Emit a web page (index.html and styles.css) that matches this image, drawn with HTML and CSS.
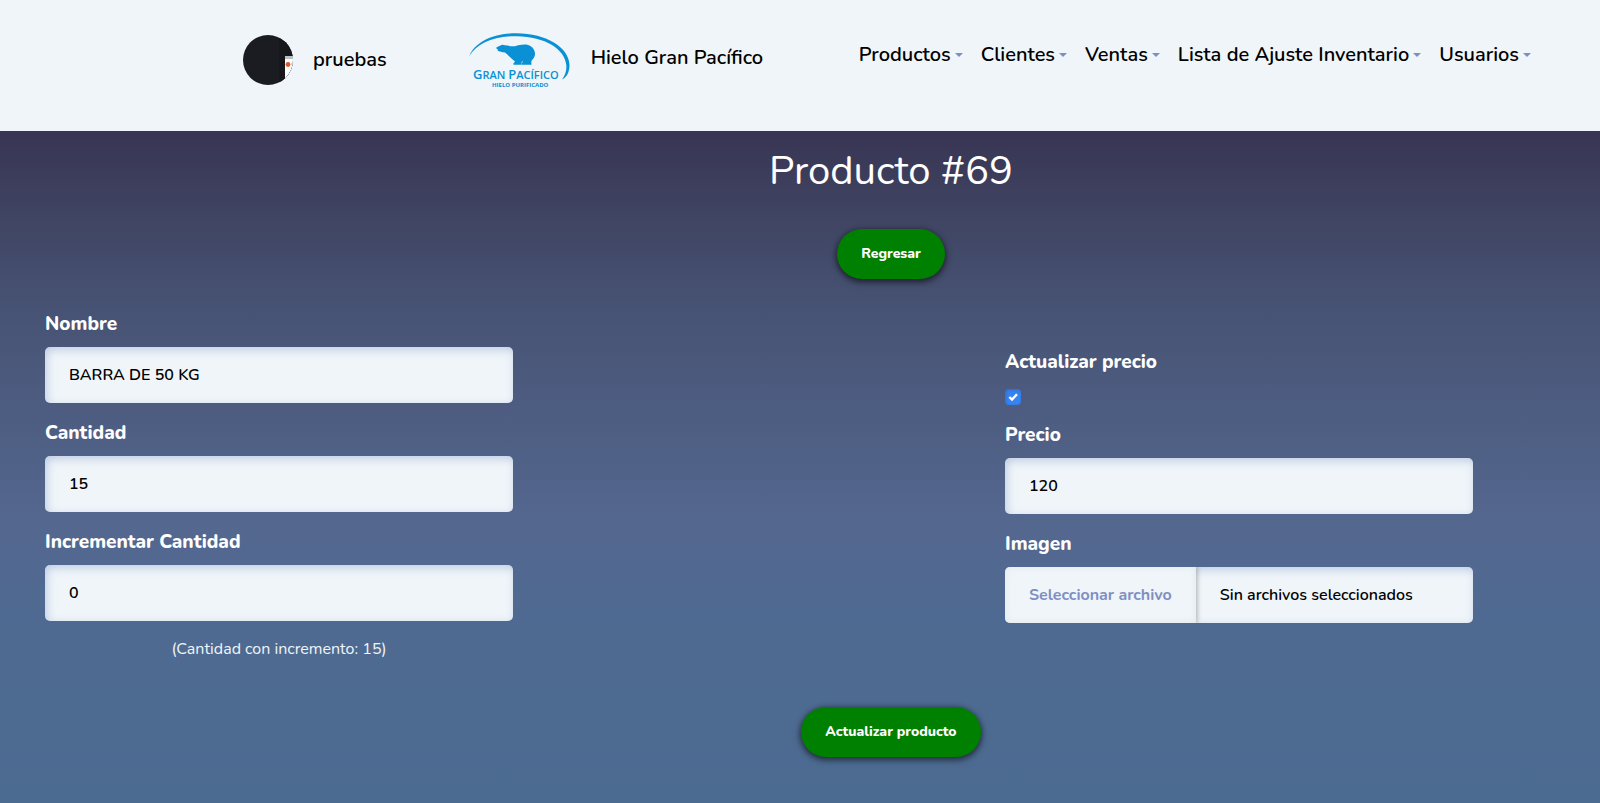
FILE: index.html
```html
<!DOCTYPE html>
<html lang="es">
<head>
<meta charset="utf-8">
<meta name="viewport" content="width=device-width, initial-scale=1">
<title>Producto #69 - Hielo Gran Pacífico</title>
<link rel="stylesheet" href="styles.css">
</head>
<body>
<header class="topbar">
  <a class="user" href="#perfil">
    <svg class="avatar" viewBox="0 0 50 50" aria-hidden="true">
      <defs><clipPath id="avatar-clip"><circle cx="25" cy="25" r="25"/></clipPath></defs>
      <g clip-path="url(#avatar-clip)">
        <rect width="50" height="50" fill="#1b1c21"/>
        <rect x="36" width="14" height="50" fill="#16171b"/>
        <rect x="42" y="21" width="8" height="29" fill="#ffffff"/>
        <rect x="42" y="21" width="8" height="3" fill="#b9c0c4"/>
        <circle cx="45" cy="29.500" r="2.400" fill="#e2562b"/>
        <rect x="48" y="28" width="2" height="2" fill="#c5d3e8"/>
      </g>
    </svg>
    <span>pruebas</span>
  </a>
  <a class="brand" href="#inicio">
    <svg class="logo" viewBox="0 0 102 56" role="img" aria-label="Gran Pacífico">
      <g fill="#0a90d4">
        <path d="M0.300 23C6 9 24 0.300 47 0.300C78 0.300 100.200 15 100.500 32C100.500 39 98 44 93 46.500C96 42.500 97.800 38 97.300 32C96 16 76 3.700 48 3.200C25 2.900 8 10.500 0.300 23Z"/>
        <path d="M27 15C28.500 13.500 30 13.500 31.500 12.500C33 11.300 34.500 12 36 12.300C39 12.500 42 13.500 46 13.200C50 12 55 11 59 12C63.500 13.300 66 17 66 21C66 24.500 63.500 26 62.300 28.500L62.500 31.800H53V30L54 28.500H52.700V31.800H44.500V30L46 29C45.500 27.500 44 26.800 42.500 25.500C40 23.500 38.500 21.500 36 19.500C33 19.500 30.500 18.300 28.500 17.800L29 16.800Z"/>
        <text class="logo-name" x="4" y="46"><tspan class="logo-cap">G</tspan>RAN <tspan class="logo-cap">P</tspan>ACÍFICO</text>
        <text class="logo-tag" x="23" y="54">HIELO PURIFICADO</text>
      </g>
    </svg>
    <span class="brand-name">Hielo Gran Pacífico</span>
  </a>
  <nav class="menu" aria-label="Principal">
    <button class="menu-item" type="button">Productos</button>
    <button class="menu-item" type="button">Clientes</button>
    <button class="menu-item" type="button">Ventas</button>
    <button class="menu-item" type="button">Lista de Ajuste Inventario</button>
    <button class="menu-item" type="button">Usuarios</button>
  </nav>
</header>
<main class="page">
  <div class="page-head">
    <h1 class="title">Producto #69</h1>
    <a class="btn" href="#productos">Regresar</a>
  </div>
  <form class="product-form">
    <div class="columns">
      <div class="column">
        <div class="field">
          <label class="label" for="nombre">Nombre</label>
          <input class="control" id="nombre" type="text" value="BARRA DE 50 KG">
        </div>
        <div class="field">
          <label class="label" for="cantidad">Cantidad</label>
          <input class="control" id="cantidad" type="number" value="15">
        </div>
        <div class="field">
          <label class="label" for="incremento">Incrementar Cantidad</label>
          <input class="control" id="incremento" type="number" value="0">
        </div>
        <p class="hint">(Cantidad con incremento: 15)</p>
      </div>
      <div class="column column-end">
        <div class="field">
          <label class="label" for="actualizar">Actualizar precio</label>
          <input class="check" id="actualizar" type="checkbox" checked>
        </div>
        <div class="field">
          <label class="label" for="precio">Precio</label>
          <input class="control" id="precio" type="number" value="120">
        </div>
        <div class="field">
          <label class="label" for="imagen">Imagen</label>
          <label class="file">
            <input class="file-input" id="imagen" type="file">
            <span class="file-button">Seleccionar archivo</span>
            <span class="file-name">Sin archivos seleccionados</span>
          </label>
        </div>
      </div>
    </div>
    <div class="actions">
      <button class="btn" type="submit">Actualizar producto</button>
    </div>
  </form>
</main>
</body>
</html>
```
FILE: styles.css
```css
* {
  box-sizing: border-box;
}

body {
  margin: 0;
  min-height: 100vh;
  display: flex;
  flex-direction: column;
  font-family: Nunito, Lato, sans-serif;
  font-size: 16px;
  line-height: 24px;
  color: #000;
  background: #4c6b91;
}

a {
  color: inherit;
  text-decoration: none;
}

button,
input {
  font: inherit;
  color: inherit;
}

.topbar {
  display: flex;
  align-items: flex-start;
  padding: 33px 69px 42px 243px;
  background: #eff5f9;
  font-size: 20px;
  font-weight: 600;
}

.user,
.brand {
  display: flex;
  gap: 20px;
  white-space: nowrap;
}

.user {
  align-items: center;
  padding-top: 2px;
}

.brand {
  align-items: flex-start;
  margin-left: 82px;
}

.brand-name {
  line-height: 50px;
}

.avatar {
  width: 50px;
  height: 50px;
}

.logo {
  width: 102px;
  height: 56px;
}

.logo-name {
  font: 600 11px "Open Sans", sans-serif;
}

.logo-cap {
  font-size: 13px;
}

.logo-tag {
  font: 700 6px "Open Sans", sans-serif;
}

.menu {
  display: flex;
  flex-wrap: wrap;
  gap: 18px;
  margin-left: auto;
  padding-top: 10px;
}

.menu-item {
  display: flex;
  align-items: center;
  gap: 4px;
  padding: 0;
  border: 0;
  background: none;
  cursor: pointer;
}

.menu-item::after {
  content: "";
  border: 4px solid transparent;
  border-top-color: #7f8ec2;
  border-bottom: 0;
}

.page {
  flex: 1;
  padding: 16px 0 46px;
  background: linear-gradient(#383553 0, #404664 14%, #475374 27%, #54678f 58%, #4f6a92 72%, #4c6b91 100%);
}

.page-head,
.actions {
  display: flex;
  flex-direction: column;
  align-items: center;
  padding-left: 182px;
}

.title {
  margin: 0 0 34px;
  font-size: 40px;
  font-weight: 400;
  line-height: 48px;
  color: #fff;
}

.btn {
  padding: 13px 24px;
  border: 0;
  border-radius: 25px;
  background: #008000;
  box-shadow: 0 2px 6px 1px rgba(0, 0, 0, 0.6);
  color: #fff;
  font-size: 14px;
  font-weight: 800;
  line-height: 24px;
  cursor: pointer;
}

.columns {
  display: grid;
  grid-template-columns: 468fr 468fr;
  column-gap: 492px;
  padding: 30px 127px 0 45px;
}

.column {
  display: flex;
  flex-direction: column;
  gap: 15px;
}

.column-end {
  padding-top: 38px;
}

.field {
  display: flex;
  flex-direction: column;
  gap: 8px;
}

.label {
  font-size: 19px;
  font-weight: 800;
  line-height: 30px;
  color: #fff;
}

.control,
.file {
  width: 100%;
  height: 56px;
  border: 0;
  border-radius: 5px;
  background: #eff5f9;
  box-shadow: inset 2px 3px 8px rgba(100, 130, 190, 0.35);
  font-weight: 600;
}

.control {
  padding: 0 24px;
  appearance: textfield;
}

.check {
  appearance: none;
  width: 16px;
  height: 16px;
  margin: 4px 0 0;
  border-radius: 4px;
  background: #3783f0 url("data:image/svg+xml,%3Csvg xmlns='http://www.w3.org/2000/svg' viewBox='0 0 16 16'%3E%3Cpath d='M4.300 8l2.700 2.600 5-5.400' fill='none' stroke='white' stroke-width='2.400'/%3E%3C/svg%3E") center / 100%;
  box-shadow: inset 1px 1px 3px rgba(40, 70, 150, 0.4);
}

.file {
  position: relative;
  display: flex;
  overflow: hidden;
  line-height: 56px;
  white-space: nowrap;
  cursor: pointer;
}

.file-input {
  position: absolute;
  inset: 0;
  opacity: 0;
}

.file-button {
  padding: 0 24px;
  background: #eff5f9;
  box-shadow: inset 0 0 8px rgba(0, 0, 0, 0.06), 1px 0 5px rgba(0, 0, 0, 0.3);
  color: #7f8ec2;
  font-weight: 700;
}

.file-name {
  padding: 0 24px;
}

.hint {
  margin: 0;
  padding-top: 1px;
  color: #eff5f9;
  text-align: center;
}

.actions {
  padding-top: 46px;
}
```
